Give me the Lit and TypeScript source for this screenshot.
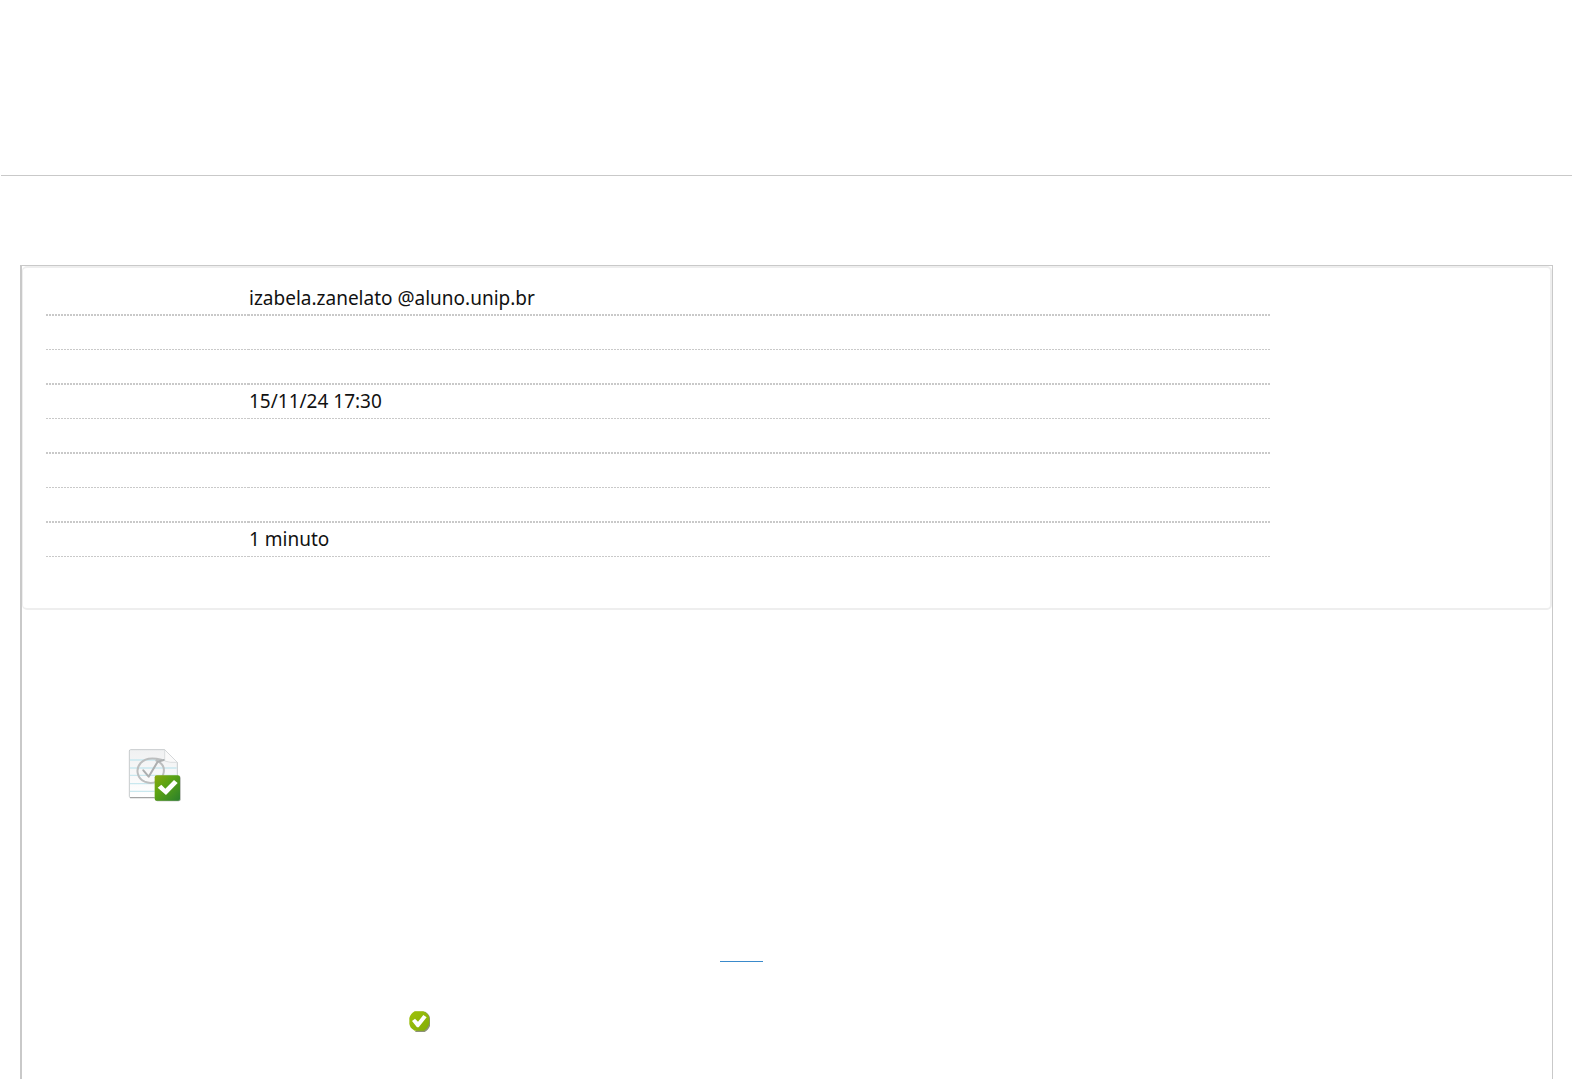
import { LitElement, html, css, svg } from "lit";
import { customElement } from "lit/decorators.js";

const ROWS = ["izabela.zanelato @aluno.unip.br", "", "", "15/11/24 17:30", "", "", "", "1 minuto"];

const documentIcon = svg`
  <svg class="document" viewBox="24 21 162 162" role="img" aria-label="Atividade">
    <defs>
      <linearGradient id="paper" x1="0" y1="0" x2="0" y2="1">
        <stop offset="0" stop-color="#f0f1f2" />
        <stop offset="1" stop-color="#ffffff" />
      </linearGradient>
      <linearGradient id="badge" x1="0" y1="0" x2="1" y2="1">
        <stop offset="0" stop-color="#8aa80c" />
        <stop offset=".4" stop-color="#5ba313" />
        <stop offset="1" stop-color="#2a7f2c" />
      </linearGradient>
    </defs>
    <path d="M32 26H134L172 64V170H32Q28 170 28 166V30Q28 26 32 26Z" fill="url(#paper)" stroke="#c6cacc" stroke-width="3" stroke-linejoin="round" />
    <path d="M30 57H160M30 81H170M30 103H170M30 128H104M30 151H104" stroke="#c9e8ef" stroke-width="4" />
    <path d="M30 170H104" stroke="#9b9b9b" stroke-width="3" />
    <path d="M134 26V60Q150 66 172 64Z" fill="#fafafa" stroke="#cfd2d3" stroke-width="2" />
    <path d="M124 56C100 50 76 50 62 66C45 85 52 112 74 122C98 132 127 120 131 95C134 78 125 65 109 59" fill="none" stroke="#bcbebf" stroke-width="6" stroke-linecap="round" />
    <path d="M70 88L86 107L113 62L131 57" fill="none" stroke="#adafb0" stroke-width="6" stroke-linecap="round" stroke-linejoin="round" />
    <rect x="106" y="105" width="76" height="76" rx="6" fill="#a7ada5" />
    <rect x="104" y="103" width="76" height="76" rx="6" fill="url(#badge)" />
    <path d="M113 140L124 131L136 143L162 117L173 126L138 162Z" fill="#fff" />
  </svg>`;

const statusIcon = svg`
  <svg class="status" viewBox="24 30 69 69" role="img" aria-label="Correta">
    <defs>
      <linearGradient id="disc" x1="0" y1="0" x2="1" y2="1">
        <stop offset="0" stop-color="#9fc20a" />
        <stop offset="1" stop-color="#82ac08" />
      </linearGradient>
    </defs>
    <path d="M44 35H76Q90 44 90 56V78Q84 92 74 96H45L52 86Z" fill="#8d9278" />
    <path d="M44 34H70Q88 42 88 58V70Q84 86 72 92H44Q28 84 28 70V54Q32 40 44 34Z" fill="url(#disc)" />
    <path d="M36 63L45 56L54 65L70 45L80 52L56 82H51Z" fill="#fff" />
  </svg>`;

@customElement("app-root")
export class AppRoot extends LitElement {
  static styles = css`
    :host {
      display: flex;
      flex-direction: column;
      min-height: 100vh;
      background: #fff;
      color: #111;
      font-family: "Noto Sans", "Open Sans", sans-serif;
      font-size: 19px;
    }
    * {
      box-sizing: border-box;
    }
    header {
      height: 176px;
      margin: 0 0 0 1px;
      border-bottom: 1px solid #c9c9c9;
    }
    main {
      flex: 1;
      margin: 89px 19px 0 20px;
      border: solid #c9c9c9;
      border-width: 1px 1px 0 2px;
      padding-bottom: 46px;
    }
    .details {
      border: 2px solid #eee;
      border-left-width: 1px;
      border-radius: 5px;
      padding: 13px 0 51px 23px;
    }
    table {
      width: calc(81% + 6px);
      table-layout: fixed;
      border-spacing: 0;
    }
    th {
      width: 203px;
    }
    th,
    td {
      height: 34px;
      padding: 0 0 3px;
      line-height: 26px;
      vertical-align: middle;
      text-align: left;
      background: repeating-linear-gradient(to left, #c9c9c9 0 2px, transparent 2px 3px) left bottom / 100% 1px no-repeat;
    }
    tr:nth-child(odd) > * {
      height: 35px;
      padding-bottom: 1px;
      background-size: 100% 2px;
    }
    section {
      display: flex;
      flex-direction: column;
      align-items: flex-start;
    }
    .document {
      width: 54px;
      height: 54px;
      margin: 138px 0 0 106px;
    }
    .more {
      width: 43px;
      height: 20px;
      margin: 140px 0 48px 698px;
      border-bottom: 1px solid #3a8acb;
    }
    .status {
      width: 23px;
      height: 23px;
      margin-left: 386px;
    }
  `;

  render() {
    return html`
      <header></header>
      <main>
        <div class="details">
          <table>
            <tbody>
              ${ROWS.map((value) => html`<tr><th scope="row"></th><td>${value}</td></tr>`)}
            </tbody>
          </table>
        </div>
        <section>
          ${documentIcon}
          <a class="more" href="#" aria-label="Link"></a>
          ${statusIcon}
        </section>
      </main>
    `;
  }
}
